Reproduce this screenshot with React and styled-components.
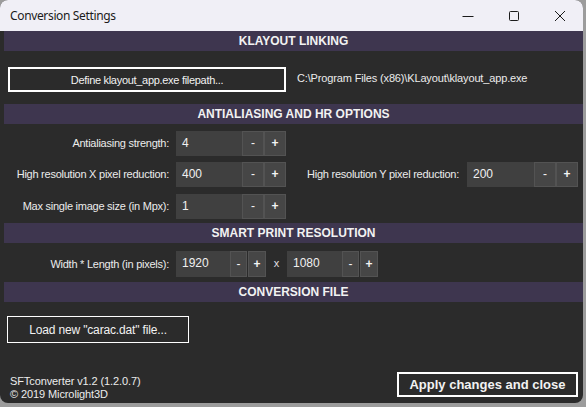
import React from "react";
import styled, { createGlobalStyle } from "styled-components";

const Global = createGlobalStyle`
  html, body { margin: 0; padding: 0; background: #9c9c9c; }
  body { width: 586px; height: 407px; overflow: hidden; }
  * { box-sizing: border-box; }
`;

const Win = styled.div`
  width: 583px;
  height: 403px;
  background: #2b2b2b;
  border-radius: 8px;
  overflow: hidden;
  display: flex;
  flex-direction: column;
  font-family: "Liberation Sans", Arial, sans-serif;
  color: #ececec;
`;

const TitleBar = styled.div`
  height: 31px;
  flex: none;
  background: #f0eff6;
  display: flex;
  align-items: center;
  padding-left: 10px;
  color: #1b1b1b;
  font-family: "Noto Sans", "Open Sans", sans-serif;
  font-size: 12px;
  letter-spacing: -0.35px;
`;

const Title = styled.div`
  flex: 1;
  padding-bottom: 1px;
`;

const Ctl = styled.div`
  width: 46px;
  height: 31px;
  display: flex;
  align-items: center;
  justify-content: center;
`;

const Body = styled.div`
  flex: 1;
  display: flex;
  flex-direction: column;
  padding-left: 4px;
`;

const Band = styled.div`
  height: 20px;
  flex: none;
  background: #3e364f;
  display: flex;
  align-items: center;
  justify-content: center;
  font-weight: bold;
  font-size: 12px;
  color: #f2f2f2;
`;

const Section = styled.div`
  display: flex;
  flex-direction: column;
  padding: ${(p) => p.$pad};
`;

const Row = styled.div`
  display: flex;
  align-items: center;
  height: ${(p) => p.$h}px;
  margin-top: ${(p) => p.$mt || 0}px;
`;

const Label = styled.div`
  width: ${(p) => p.$w}px;
  text-align: right;
  font-size: 11px;
  letter-spacing: -0.25px;
  margin-right: ${(p) => p.$gap}px;
  white-space: nowrap;
  padding-bottom: 1px;
`;

const Field = styled.div`
  width: ${(p) => p.$w}px;
  height: 100%;
  background: #404040;
  display: flex;
  align-items: center;
  padding-left: 6px;
  font-size: 12px;
  color: #f0f0f0;
  padding-bottom: 2px;
`;

const StepBtn = styled.div`
  width: ${(p) => p.$w}px;
  height: 100%;
  background: #464646;
  border: 1px solid #535353;
  margin-left: ${(p) => p.$ml || 0}px;
  display: flex;
  align-items: center;
  justify-content: center;
  font-size: 12px;
  font-weight: ${(p) => (p.$plus ? "bold" : "normal")};
  color: #f4f4f4;
  padding-bottom: 1px;
`;

const Times = styled.div`
  width: 21px;
  text-align: center;
  font-size: 11px;
  color: #e0e0e0;
  padding-bottom: 2px;
`;

const OutlineBtn = styled.div`
  width: ${(p) => p.$w}px;
  height: ${(p) => p.$h}px;
  border: ${(p) => p.$bw}px solid #ffffff;
  display: flex;
  align-items: center;
  justify-content: center;
  font-size: ${(p) => p.$fs}px;
  letter-spacing: ${(p) => p.$ls || 0}px;
  font-weight: ${(p) => (p.$bold ? "bold" : "normal")};
  color: #f2f2f2;
  background: #2b2b2b;
`;

const LinkRow = styled.div`
  display: flex;
  align-items: center;
  gap: 11px;
`;

const PathText = styled.div`
  font-size: 11px;
  letter-spacing: -0.15px;
  padding-bottom: 3px;
`;

const Footer = styled.div`
  flex: 1;
  display: flex;
  align-items: flex-end;
  justify-content: space-between;
  padding: 0 5px 6px 6px;
`;

const Credits = styled.div`
  font-size: 11px;
  letter-spacing: -0.1px;
  line-height: 13px;
  margin-bottom: -4px;
`;

function Spinner({ value, w, mw, pw, gap = 1 }) {
  return (
    <>
      <Field $w={w}>{value}</Field>
      <StepBtn $w={mw}>-</StepBtn>
      <StepBtn $w={pw} $ml={gap} $plus>+</StepBtn>
    </>
  );
}

export default function App() {
  return (
    <>
      <Global />
      <Win>
        <TitleBar>
          <Title>Conversion Settings</Title>
          <Ctl>
            <svg width="12" height="12" viewBox="0 0 12 12">
              <path d="M0.5 6.5h11" stroke="#1b1b1b" strokeWidth="1" />
            </svg>
          </Ctl>
          <Ctl>
            <svg width="12" height="12" viewBox="0 0 12 12">
              <rect x="1.5" y="1.5" width="9" height="9" rx="1" fill="none" stroke="#1b1b1b" strokeWidth="1" />
            </svg>
          </Ctl>
          <Ctl>
            <svg width="12" height="12" viewBox="0 0 12 12">
              <path d="M1 1L11 11M11 1L1 11" stroke="#1b1b1b" strokeWidth="1" />
            </svg>
          </Ctl>
        </TitleBar>
        <Body>
          <Band>KLAYOUT LINKING</Band>
          <Section $pad="16px 0 12px 4px">
            <LinkRow>
              <OutlineBtn $w={278} $h={25} $bw={2} $fs={11} $ls={-0.3}>
                Define klayout_app.exe filepath...
              </OutlineBtn>
              <PathText>C:\Program Files (x86)\KLayout\klayout_app.exe</PathText>
            </LinkRow>
          </Section>
          <Band>ANTIALIASING AND HR OPTIONS</Band>
          <Section $pad="7px 0 4px 0">
            <Row $h={25}>
              <Label $w={165} $gap={7}>Antialiasing strength:</Label>
              <Spinner value="4" w={66} mw={22} pw={22} gap={0} />
            </Row>
            <Row $h={25} $mt={6}>
              <Label $w={165} $gap={7}>High resolution X pixel reduction:</Label>
              <Spinner value="400" w={66} mw={22} pw={22} gap={0} />
              <Label $w={173} $gap={8}>High resolution Y pixel reduction:</Label>
              <Spinner value="200" w={67} mw={22} pw={22} gap={0} />
            </Row>
            <Row $h={25} $mt={7}>
              <Label $w={165} $gap={7}>Max single image size (in Mpx):</Label>
              <Spinner value="1" w={66} mw={22} pw={22} gap={0} />
            </Row>
          </Section>
          <Band>SMART PRINT RESOLUTION</Band>
          <Section $pad="8px 0 5px 0">
            <Row $h={26}>
              <Label $w={165} $gap={7}>Width * Length (in pixels):</Label>
              <Spinner value="1920" w={54} mw={17} pw={18} />
              <Times>x</Times>
              <Spinner value="1080" w={55} mw={17} pw={18} />
            </Row>
          </Section>
          <Band>CONVERSION FILE</Band>
          <Section $pad="14px 0 0 3px">
            <OutlineBtn $w={182} $h={27} $bw={1} $fs={12} $ls={-0.15}>
              Load new "carac.dat" file...
            </OutlineBtn>
          </Section>
          <Footer>
            <Credits>
              SFTconverter v1.2 (1.2.0.7)
              <br />© 2019 Microlight3D
            </Credits>
            <OutlineBtn $w={181} $h={25} $bw={2} $fs={13} $bold>Apply changes and close</OutlineBtn>
          </Footer>
        </Body>
      </Win>
    </>
  );
}
